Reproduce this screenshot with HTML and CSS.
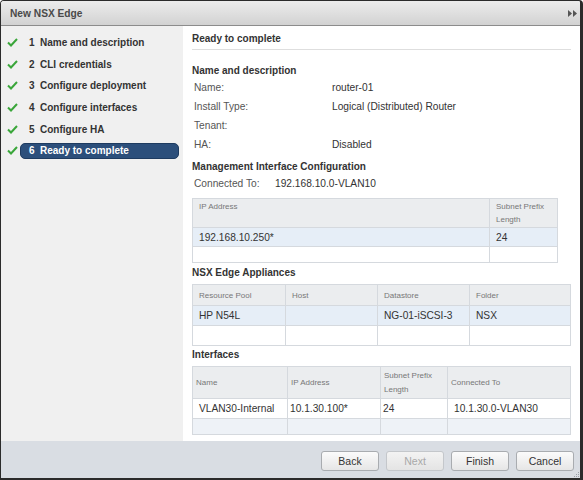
FILE: index.html
```html
<!DOCTYPE html>
<html>
<head>
<meta charset="utf-8">
<title>New NSX Edge</title>
<link rel="stylesheet" href="styles.css">
</head>
<body>
<div class="window">
  <div class="titlebar">
    <span class="title">New NSX Edge</span>
    <svg class="expand" width="10" height="7" viewBox="0 0 10 7"><polygon points="0,0 4,3.5 0,7" fill="#555"/><polygon points="5,0 9,3.5 5,7" fill="#555"/></svg>
  </div>
  <div class="main">
    <nav class="steps">
      <div class="step"><svg class="check" width="11" height="9" viewBox="0 0 11 9"><polyline points="1,4.5 4,7.5 10,1" fill="none" stroke="#3aa63a" stroke-width="2"/></svg><div class="step-label"><span class="num">1</span>Name and description</div></div>
      <div class="step"><svg class="check" width="11" height="9" viewBox="0 0 11 9"><polyline points="1,4.5 4,7.5 10,1" fill="none" stroke="#3aa63a" stroke-width="2"/></svg><div class="step-label"><span class="num">2</span>CLI credentials</div></div>
      <div class="step"><svg class="check" width="11" height="9" viewBox="0 0 11 9"><polyline points="1,4.5 4,7.5 10,1" fill="none" stroke="#3aa63a" stroke-width="2"/></svg><div class="step-label"><span class="num">3</span>Configure deployment</div></div>
      <div class="step"><svg class="check" width="11" height="9" viewBox="0 0 11 9"><polyline points="1,4.5 4,7.5 10,1" fill="none" stroke="#3aa63a" stroke-width="2"/></svg><div class="step-label"><span class="num">4</span>Configure interfaces</div></div>
      <div class="step"><svg class="check" width="11" height="9" viewBox="0 0 11 9"><polyline points="1,4.5 4,7.5 10,1" fill="none" stroke="#3aa63a" stroke-width="2"/></svg><div class="step-label"><span class="num">5</span>Configure HA</div></div>
      <div class="step active"><svg class="check" width="11" height="9" viewBox="0 0 11 9"><polyline points="1,4.5 4,7.5 10,1" fill="none" stroke="#3aa63a" stroke-width="2"/></svg><div class="step-label"><span class="num">6</span>Ready to complete</div></div>
    </nav>
    <section class="content">
      <h1 class="page-title">Ready to complete</h1>

      <h2 class="section first">Name and description</h2>
      <div class="props">
        <span class="label">Name:</span><span class="value">router-01</span>
        <span class="label">Install Type:</span><span class="value">Logical (Distributed) Router</span>
        <span class="label">Tenant:</span><span class="value"></span>
        <span class="label">HA:</span><span class="value">Disabled</span>
      </div>

      <h2 class="section mgmt">Management Interface Configuration</h2>
      <div class="props conn">
        <span class="label">Connected To:</span><span class="value">192.168.10.0-VLAN10</span>
      </div>

      <table class="grid t1">
        <colgroup><col class="c-ip"><col class="c-prefix"></colgroup>
        <tr class="head"><th>IP Address</th><th>Subnet Prefix<br>Length</th></tr>
        <tr class="data blue"><td>192.168.10.250*</td><td>24</td></tr>
        <tr class="empty"><td></td><td></td></tr>
      </table>

      <h2 class="section tight">NSX Edge Appliances</h2>
      <table class="grid t2">
        <colgroup><col class="c-a"><col class="c-b"><col class="c-c"><col class="c-d"></colgroup>
        <tr class="head"><th>Resource Pool</th><th>Host</th><th>Datastore</th><th>Folder</th></tr>
        <tr class="data blue"><td>HP N54L</td><td></td><td>NG-01-iSCSI-3</td><td>NSX</td></tr>
        <tr class="empty"><td></td><td></td><td></td><td></td></tr>
      </table>

      <h2 class="section tight2">Interfaces</h2>
      <table class="grid t3">
        <colgroup><col class="c-a"><col class="c-b"><col class="c-c"><col class="c-d"></colgroup>
        <tr class="head"><th>Name</th><th>IP Address</th><th>Subnet Prefix<br>Length</th><th>Connected To</th></tr>
        <tr class="data"><td class="pad-l">VLAN30-Internal</td><td>10.1.30.100*</td><td>24</td><td class="pad-l">10.1.30.0-VLAN30</td></tr>
        <tr class="empty blue-light"><td></td><td></td><td></td><td></td></tr>
      </table>
    </section>
  </div>
  <div class="footer">
    <button class="btn">Back</button>
    <button class="btn" disabled>Next</button>
    <button class="btn">Finish</button>
    <button class="btn">Cancel</button>
    <svg class="grip" width="7" height="7" viewBox="0 0 7 7"><g fill="#9aa0a8"><rect x="5" y="1" width="1" height="1"/><rect x="3" y="3" width="1" height="1"/><rect x="5" y="3" width="1" height="1"/><rect x="1" y="5" width="1" height="1"/><rect x="3" y="5" width="1" height="1"/><rect x="5" y="5" width="1" height="1"/></g></svg>
  </div>
</div>
</body>
</html>
```

FILE: styles.css
```css
body {
  margin: 0;
  font-family: "Liberation Sans", Arial, sans-serif;
  background: #fff;
}

.window {
  width: 583px;
  height: 480px;
  box-sizing: border-box;
  border: 1px solid #2b2b2b;
  border-right-width: 3px;
  border-bottom-width: 2px;
  border-radius: 4px 4px 0 0;
  display: flex;
  flex-direction: column;
  overflow: hidden;
  background: #fff;
}

.titlebar {
  height: 24px;
  flex: none;
  border-bottom: 1px solid #8c8c8c;
  background: linear-gradient(#ececec, #d2d2d2);
  display: flex;
  align-items: center;
  justify-content: space-between;
  padding: 0 2px 0 9px;
}

.title {
  font-size: 10.2px;
  font-weight: bold;
  color: #4a4a4a;
}

.main {
  flex: 1;
  display: flex;
  min-height: 0;
}

.steps {
  width: 182px;
  flex: none;
  background: #f0f0f0;
  padding-top: 6px;
  box-sizing: border-box;
}

.step {
  height: 21.6px;
  display: flex;
  align-items: center;
  padding-left: 6px;
  padding-right: 4px;
}

.check {
  flex: none;
}

.step-label {
  flex: 1;
  margin-left: 2px;
  height: 16px;
  box-sizing: border-box;
  display: flex;
  align-items: center;
  padding-left: 8px;
  font-size: 10px;
  font-weight: bold;
  color: #333;
  border: 1px solid transparent;
  border-radius: 5px;
}

.num {
  width: 11px;
  flex: none;
}

.step.active .step-label {
  background: #2c4f7b;
  border-color: #1e3b60;
  color: #fff;
}

.content {
  flex: 1;
  padding: 6px 10px 0 9px;
  color: #333;
  font-size: 10.2px;
}

.page-title {
  margin: 0;
  font-size: 10px;
  font-weight: bold;
  line-height: 13px;
  padding-bottom: 4px;
  border-bottom: 1px solid #dedede;
  color: #333;
}

.section {
  margin: 0;
  font-size: 10px;
  font-weight: bold;
  line-height: 13px;
  color: #333;
}

.section.first { margin-top: 14px; }
.section.mgmt { margin-top: 6px; }
.section.tight { margin-top: 3px; margin-bottom: 5px; }
.section.tight2 { margin-top: 2px; margin-bottom: 5px; }

.props {
  display: grid;
  grid-template-columns: 140px auto;
  line-height: 19px;
  margin-top: 1px;
}

.props.conn {
  grid-template-columns: 83px auto;
  margin-bottom: 5px;
}

.label {
  padding-left: 2px;
  color: #555;
}

.value {
  color: #333;
  min-height: 19px;
}

.grid {
  border-collapse: collapse;
  table-layout: fixed;
  font-size: 10.2px;
}

.grid th,
.grid td {
  border: 1px solid #d5d9de;
  padding: 0 0 0 6px;
  text-align: left;
  vertical-align: middle;
  white-space: nowrap;
  overflow: hidden;
}

.grid th {
  font-weight: normal;
  font-size: 8px;
  line-height: 13px;
  color: #777;
  background: #ebedef;
}

.grid td { color: #333; }

.grid tr.blue td { background: #e6eef7; }
.grid tr.blue-light td { background: #eef2f7; }

.t1 { width: 365px; }
.t1 .c-ip { width: 297px; }
.t1 .c-prefix { width: 68px; }
.t1 tr.head { height: 29px; }
.t1 th { vertical-align: top; padding-top: 1px; }
.t1 tr.data { height: 19px; }
.t1 tr.empty { height: 16px; }

.t2 { width: 378px; }
.t2 .c-a { width: 93px; }
.t2 .c-b { width: 92px; }
.t2 .c-c { width: 92px; }
.t2 .c-d { width: 101px; }
.t2 tr.head { height: 21px; }
.t2 tr.data { height: 20px; }
.t2 tr.empty { height: 20px; }

.t3 { width: 378px; }
.t3 .c-a { width: 95px; }
.t3 .c-b { width: 93px; }
.t3 .c-c { width: 67px; }
.t3 .c-d { width: 123px; }
.t3 tr.head { height: 32px; }
.t3 th { padding-left: 3px; line-height: 14px; }
.t3 td { padding-left: 2px; }
.t3 td.pad-l { padding-left: 6px; }
.t3 tr.data { height: 20px; }
.t3 tr.empty { height: 16px; }

.footer {
  height: 37px;
  flex: none;
  box-sizing: border-box;
  background: #d9dde3;
  display: flex;
  justify-content: flex-end;
  align-items: flex-start;
  gap: 7px;
  padding: 10px 6px 0 0;
  position: relative;
}

.btn {
  width: 58px;
  height: 20px;
  box-sizing: border-box;
  border: 1px solid #a9acb0;
  border-radius: 3px;
  background: linear-gradient(#fbfbfb, #e6e6e6);
  font-family: "Liberation Sans", Arial, sans-serif;
  font-size: 10.5px;
  color: #333;
  padding: 0;
}

.btn:disabled {
  color: #a8a8a8;
  border-color: #c4c7cb;
  background: linear-gradient(#f3f3f3, #e4e4e4);
}

.grip {
  position: absolute;
  right: 0;
  bottom: 0;
}
```
